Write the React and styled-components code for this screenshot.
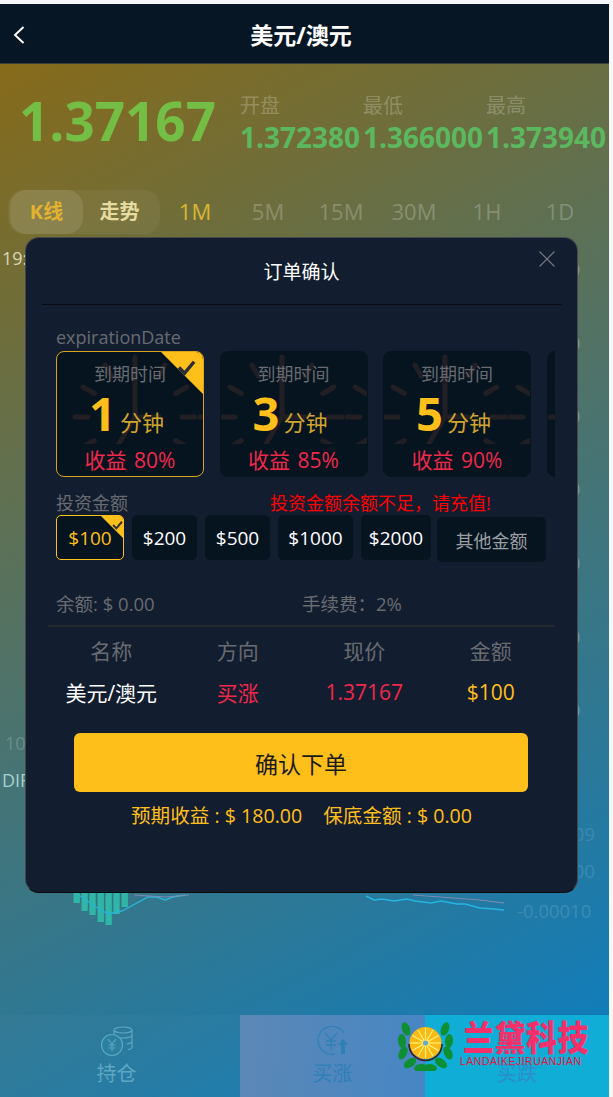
import React from "react";
import styled, { createGlobalStyle } from "styled-components";

const GlobalStyle = createGlobalStyle`
  html, body {
    margin: 0;
    padding: 0;
    background: #f6f7f8;
  }
  * {
    box-sizing: border-box;
  }
  body {
    font-family: "Open Sans", "Noto Sans CJK SC", sans-serif;
  }
`;

const Page = styled.div`
  position: relative;
  display: flex;
  flex-direction: column;
  width: 609px;
  height: 1093px;
  margin-top: 4px;
  overflow: hidden;
  background: linear-gradient(152deg, #8c6a12 0%, #4f7268 48%, #0a7ec4 100%);
`;

/* header */
const Header = styled.div`
  flex: none;
  position: relative;
  display: flex;
  align-items: center;
  justify-content: center;
  height: 60px;
  padding: 0 7px 0 0;
  background: #061624;
  border-bottom: 1px solid #38423a;
`;

const BackIcon = styled.svg`
  position: absolute;
  left: 12px;
  top: 21px;
  width: 14px;
  height: 20px;
`;

const Title = styled.div`
  font-size: 23px;
  font-weight: 700;
  color: #fff;
`;

/* price summary */
const Summary = styled.div`
  flex: none;
  display: flex;
  height: 126px;
  padding: 21px 0 0 19px;
`;

const Price = styled.div`
  width: 221px;
  font-size: 53px;
  line-height: 72px;
  font-weight: 700;
  color: #74be45;
`;

const Stat = styled.div`
  width: 123px;
  flex: none;
  padding-top: 7px;
`;

const StatLabel = styled.div`
  font-size: 20px;
  line-height: 28px;
  color: rgba(255, 255, 255, 0.24);
`;

const StatValue = styled.div`
  font-size: 28px;
  line-height: 34px;
  font-weight: 700;
  white-space: nowrap;
  color: #5cb85f;
`;

/* period tabs */
const Tabs = styled.div`
  flex: none;
  display: flex;
  height: 44px;
  padding-left: 8px;
`;

const ChartTypes = styled.div`
  display: flex;
  margin-right: -1.5px;
  padding: 0 4px 0 2px;
  border-radius: 16px;
  background: rgba(255, 255, 255, 0.05);
`;

const Tab = styled.div`
  width: 73px;
  display: flex;
  align-items: center;
  justify-content: center;
  padding-bottom: 3px;
  font-size: ${(p) => (p.$bold ? 20 : 22)}px;
  border-radius: 16px;
  font-weight: ${(p) => (p.$bold ? 700 : 400)};
  color: ${(p) => p.$color || "rgba(255, 255, 255, 0.24)"};
  background: ${(p) => (p.$active ? "rgba(255, 255, 255, 0.1)" : "none")};
`;

/* chart left behind the dialog */
const Chart = styled.svg`
  flex: 1;
  display: block;
  width: 100%;
  min-height: 0;
`;

/* bottom bar */
const Footer = styled.div`
  flex: none;
  display: flex;
  height: 82px;
`;

const FooterItem = styled.div`
  width: ${(p) => p.$width}px;
  display: flex;
  flex-direction: column;
  align-items: center;
  padding: 10px ${(p) => p.$inset || 0}px 0 0;
  font-size: 20px;
  line-height: 28px;
  color: ${(p) => p.$color};
  background: ${(p) => p.$bg};
`;

const FooterIcon = styled.svg`
  width: 36px;
  height: 32px;
  margin-bottom: 3px;
`;

/* watermark */
const Logo = styled.div`
  position: absolute;
  left: 397px;
  top: 1013px;
  display: flex;
  gap: 9px;
`;

const LogoMark = styled.svg`
  width: 57px;
  height: 54px;
`;

const LogoText = styled.div`
  display: flex;
  flex-direction: column;
`;

const LogoName = styled.div`
  font-family: "Noto Sans CJK SC", sans-serif;
  font-size: 31px;
  line-height: 38px;
  font-weight: 900;
  letter-spacing: 0.5px;
  color: #f4306a;
  transform: scaleY(1.12);
`;

const LogoSub = styled.div`
  margin-left: -3px;
  font-family: "Liberation Sans", sans-serif;
  font-size: 10.5px;
  line-height: 12px;
  letter-spacing: 0.5px;
  color: #e8123e;
  white-space: nowrap;
`;

/* dialog */
const Modal = styled.div`
  position: absolute;
  left: 25px;
  top: 233px;
  width: 553px;
  height: 656px;
  display: flex;
  flex-direction: column;
  padding: 0 16px;
  border-radius: 14px;
  background: #131d30;
  border: 1px solid #44484e;
  border-bottom-color: #0a0a0a;
`;

const ModalHead = styled.div`
  position: relative;
  flex: none;
  height: 67px;
  display: flex;
  align-items: center;
  justify-content: center;
  padding-bottom: 1px;
  border-bottom: 1px solid #05080c;
  font-size: 19px;
  color: #fff;
`;

const CloseIcon = styled.svg`
  position: absolute;
  right: 5px;
  top: 12px;
  width: 18px;
  height: 18px;
`;

const Section = styled.div`
  flex: none;
  padding: 0 14px;
`;

const Label = styled.div`
  font-size: 18px;
  line-height: 24px;
  color: #686b70;
`;

const PeriodLabel = styled(Label)`
  margin-top: 19px;
  line-height: 27px;
`;

const PeriodRow = styled.div`
  display: flex;
  gap: 15.5px;
  width: 499px;
  overflow: hidden;
`;

const PeriodCard = styled.div`
  position: relative;
  flex: none;
  width: 148px;
  height: 126px;
  overflow: hidden;
  display: flex;
  flex-direction: column;
  align-items: center;
  padding-top: 10px;
  border-radius: 8px;
  background: #061420;
  border: 1px solid ${(p) => (p.$active ? "#d8a41c" : "#061420")};
`;

const ClockFace = styled.svg`
  position: absolute;
  left: 0;
  top: 0;
  width: 148px;
  height: 92px;
`;

const Corner = styled.div`
  position: absolute;
  right: 0;
  top: 0;
  width: ${(p) => p.$size}px;
  height: ${(p) => p.$size}px;
  background: #ffbf1a;
  clip-path: polygon(0 0, 100% 0, 100% 100%);
`;

const CheckMark = styled.svg`
  position: absolute;
  right: ${(p) => p.$right}px;
  top: ${(p) => p.$top}px;
  width: ${(p) => p.$size}px;
  height: ${(p) => p.$size}px;
`;

const PeriodTitle = styled.div`
  position: relative;
  font-size: 18px;
  line-height: 24px;
  color: #686b70;
`;

const PeriodValue = styled.div`
  position: relative;
  display: flex;
  align-items: baseline;
  gap: 4px;
  height: 54px;
  margin-left: -7px;
  line-height: 54px;
`;

const PeriodNumber = styled.span`
  font-size: 47px;
  font-weight: 700;
  color: #ffbf1a;
`;

const PeriodUnit = styled.span`
  font-size: 22px;
  color: #d3a52c;
`;

const PeriodProfit = styled.div`
  position: relative;
  margin-top: 7px;
  font-size: 21px;
  line-height: 26px;
  word-spacing: 2px;
  color: #f0284a;
`;

const AmountHead = styled.div`
  display: flex;
  margin-top: 14px;
`;

const AmountError = styled.div`
  margin-left: 142px;
  font-size: 18px;
  line-height: 24px;
  color: #f00;
`;

const AmountRow = styled.div`
  display: flex;
  align-items: flex-start;
  gap: 8px;
`;

const AmountButton = styled.div`
  position: relative;
  overflow: hidden;
  flex: none;
  width: ${(p) => p.$width}px;
  height: 45px;
  display: flex;
  align-items: center;
  justify-content: center;
  border-radius: 5px;
  font-size: 19px;
  background: #061420;
  color: ${(p) => (p.$active ? "#ffbf1a" : "#fff")};
  border: 1px solid ${(p) => (p.$active ? "#ffbf1a" : "#061420")};
`;

const OtherButton = styled(AmountButton)`
  margin: 2px 0 0 -2px;
  font-size: 18px;
  color: #9b9ea2;
`;

const Balance = styled.div`
  display: flex;
  margin-top: 30px;
  font-size: 18.5px;
  line-height: 24px;
  color: #686b70;
`;

const BalanceItem = styled.div`
  width: 246px;
`;

const Rule = styled.div`
  flex: none;
  height: 2px;
  margin: 9px 6px 0 6px;
  background: #23282f;
`;

const Table = styled.div`
  flex: none;
  display: grid;
  grid-template-columns: repeat(4, 126.5px);
  grid-auto-rows: 42px;
  margin: 2px 0 0 6px;
  align-items: center;
  justify-items: center;
  font-size: 21px;
`;

const Cell = styled.div`
  color: ${(p) => p.$color};
`;

const Confirm = styled.div`
  flex: none;
  display: flex;
  align-items: center;
  justify-content: center;
  height: 59px;
  margin: 20px 33px 0 32px;
  border-radius: 6px;
  font-size: 23px;
  color: #1b1b1b;
  background: #ffbf1a;
`;

const Expected = styled.div`
  flex: none;
  display: flex;
  justify-content: center;
  gap: 21px;
  margin-top: 10px;
  font-size: 19.6px;
  line-height: 28px;
  color: #ffbf1a;
`;

const PERIODS = [
  { num: 1, profit: "80%", clock: 78, active: true },
  { num: 3, profit: "85%", clock: 61 },
  { num: 5, profit: "90%", clock: 61 },
  { clock: 61 },
];

const AMOUNTS = [
  { text: "$100", width: 68, active: true },
  { text: "$200", width: 65 },
  { text: "$500", width: 65 },
  { text: "$1000", width: 75 },
  { text: "$2000", width: 70 },
];

const ROWS = [
  ["名称", "#686b70"],
  ["方向", "#686b70"],
  ["现价", "#686b70"],
  ["金额", "#686b70"],
  ["美元/澳元", "#fff"],
  ["买涨", "#f0284a"],
  ["1.37167", "#f0284a"],
  ["$100", "#ffbf1a"],
];

const BARS = [
  [73.6, 903],
  [81.5, 911],
  [89.4, 915],
  [97.6, 922],
  [105.5, 925],
  [113.4, 914],
  [121.6, 907],
];

const Clock = ({ cx }) => {
  const ticks = [];
  for (let i = 0; i < 12; i++) {
    const a = (i * Math.PI) / 6;
    ticks.push(
      <line
        key={i}
        x1={cx + Math.sin(a) * 47}
        y1={65 - Math.cos(a) * 47}
        x2={cx + Math.sin(a) * 60}
        y2={65 - Math.cos(a) * 60}
      />
    );
  }
  return (
    <g stroke="#221f24" strokeWidth="5" strokeLinecap="round" fill="none">
      {ticks}
      <path d={`M${cx} 19V65H${cx + 26}`} strokeLinecap="butt" />
      <path d={`M${cx} 65L${cx - 18} 95`} strokeLinecap="butt" />
    </g>
  );
};

const Check = ({ right, top, size }) => (
  <CheckMark $right={right} $top={top} $size={size} viewBox="0 0 20 20">
    <path d="M2 11l6 6L18 5" fill="none" stroke="#2b2f38" strokeWidth="3.6" />
  </CheckMark>
);

const LEAVES = [
  [9, 12, -20], [5, 24, -5], [6, 36, 25], [13, 46, 55], [24, 51, 85],
  [48, 12, 20], [52, 24, 5], [51, 36, -25], [44, 46, -55], [33, 51, -85],
];

const LogoIcon = () => {
  const rays = [];
  for (let i = 0; i < 12; i++) {
    rays.push(
      <line key={i} x1="28.5" y1="26" x2="28.5" y2="11" stroke="#fff27a" strokeWidth="1.2" transform={`rotate(${i * 30} 28.5 26)`} />
    );
  }
  return (
    <LogoMark viewBox="0 0 57 54">
      {LEAVES.map(([x, y, r]) => (
        <ellipse key={`${x}-${y}`} cx={x} cy={y} rx="4" ry="7" fill="#0f8f34" transform={`rotate(${r} ${x} ${y})`} />
      ))}
      <circle cx="28.5" cy="26" r="16" fill="#fdb913" />
      {rays}
      <circle cx="28.5" cy="26" r="2.5" fill="#5fa8d0" />
      <path d="M12 27a16.5 16.5 0 0 0 33 0" fill="none" stroke="#3a1f22" strokeWidth="1.6" />
    </LogoMark>
  );
};

export default function App() {
  return (
    <Page>
      <GlobalStyle />
      <Header>
        <BackIcon viewBox="0 0 14 20">
          <path d="M11.5 2L3 10l8.5 8" fill="none" stroke="#fff" strokeWidth="2" />
        </BackIcon>
        <Title>美元/澳元</Title>
      </Header>

      <Summary>
        <Price>1.37167</Price>
        <Stat>
          <StatLabel>开盘</StatLabel>
          <StatValue>1.372380</StatValue>
        </Stat>
        <Stat>
          <StatLabel>最低</StatLabel>
          <StatValue>1.366000</StatValue>
        </Stat>
        <Stat>
          <StatLabel>最高</StatLabel>
          <StatValue>1.373940</StatValue>
        </Stat>
      </Summary>

      <Tabs>
        <ChartTypes>
          <Tab $active $bold $color="#e3b22e">K线</Tab>
          <Tab $bold $color="#e6dca0">走势</Tab>
        </ChartTypes>
        <Tab $color="#d9b733">1M</Tab>
        <Tab>5M</Tab>
        <Tab>15M</Tab>
        <Tab>30M</Tab>
        <Tab>1H</Tab>
        <Tab>1D</Tab>
      </Tabs>

      <Chart viewBox="0 234 609 781">
        <g fontFamily="Open Sans, sans-serif" fontSize="18">
          <text x="2" y="265" fill="#d9d6b8">19:</text>
          <text x="5" y="750" fill="rgba(255,255,255,0.2)">10</text>
          <text x="2" y="787" fill="#a6d0d2">DIF</text>
          {[277, 350, 423, 496, 570, 644, 717].map((y, i) => (
            <text key={y} x="570" y={y} fill="rgba(255,255,255,0.28)">{i === 0 ? "9" : "0"}</text>
          ))}
          <text x="525" y="841" fontSize="19" fill="rgba(255,255,255,0.13)">0.00009</text>
          <text x="525" y="878" fontSize="19" fill="rgba(255,255,255,0.13)">0.00000</text>
          <text x="517" y="918" fontSize="18.5" fill="rgba(255,255,255,0.15)">-0.00010</text>
        </g>
        {BARS.map(([x, y]) => (
          <rect key={x} x={x} y="890" width="6.3" height={y - 890} fill="#2fb6a6" />
        ))}
        <polyline
          points="79,895 96,907 108,914 122,911 148,897 157,897 165,900 173,897 185,895"
          fill="none"
          stroke="#27b4d6"
          strokeWidth="1.4"
        />
        <polyline
          points="366,896 374,900 382,899 394,901 407,899 415,901 431,903 441,901 457,904 465,904 480,908 494,909 504,910"
          fill="none"
          stroke="#27b4e0"
          strokeWidth="1.4"
        />
        <polyline points="134,895 165,897 189,895" fill="none" stroke="#7f8ab0" strokeWidth="1.2" />
        <polyline points="413,895 480,900 504,903" fill="none" stroke="#7f8ab0" strokeWidth="1.2" />
      </Chart>

      <Footer>
        <FooterItem $width={240} $inset={7} $bg="rgba(255,255,255,0.02)" $color="#5da6c4">
          <FooterIcon viewBox="0 0 36 32" fill="none" stroke="currentColor" strokeWidth="1.2">
            <ellipse cx="24" cy="5" rx="9" ry="3" />
            <path d="M15 5v5c0 1.6 4 3 9 3s9-1.4 9-3V5M33 10v6c0 1.4-2 2.4-5 2.8M33 16v6c0 1.2-1.6 2.2-4 2.6" />
            <circle cx="13" cy="20" r="10.5" fill="#2b7f9f" />
            <path d="M9 14l4 5 4-5M13 19v7M9.5 20h7M9.5 23h7" />
          </FooterIcon>
          持仓
        </FooterItem>
        <FooterItem $width={185} $bg="linear-gradient(100deg, #5d88b6, #4586c4)" $color="#2f80b8">
          <FooterIcon viewBox="0 0 36 32" fill="none" stroke="currentColor" strokeWidth="1.3">
            <path d="M29 8A14 14 0 1 0 20 29" />
            <path d="M10 8l6 7 6-7M16 15v10M11 16h10M11 20h10" />
            <path d="M28 14l5 6h-3v9h-4v-9h-3z" fill="currentColor" stroke="none" />
          </FooterIcon>
          买涨
        </FooterItem>
        <FooterItem $width={184} $bg="#10add6" $color="#2f8cc8">
          <FooterIcon viewBox="0 0 36 32" fill="none" stroke="currentColor" strokeWidth="1.3">
            <path d="M29 8A14 14 0 1 0 20 29" />
            <path d="M10 8l6 7 6-7M16 15v10M11 16h10M11 20h10" />
          </FooterIcon>
          买跌
        </FooterItem>
      </Footer>

      <Modal>
        <ModalHead>
          订单确认
          <CloseIcon viewBox="0 0 18 18">
            <path d="M1.5 1.5l15 15M16.5 1.5l-15 15" stroke="#74777c" strokeWidth="1.2" />
          </CloseIcon>
        </ModalHead>

        <Section>
          <PeriodLabel>expirationDate</PeriodLabel>
          <PeriodRow>
            {PERIODS.map((p, i) => (
              <PeriodCard key={i} $active={p.active}>
                <ClockFace viewBox="0 0 148 92">
                  <Clock cx={p.clock} />
                  <Clock cx={p.clock + 125} />
                </ClockFace>
                {p.num && (
                  <>
                    <PeriodTitle>到期时间</PeriodTitle>
                    <PeriodValue>
                      <PeriodNumber>{p.num}</PeriodNumber>
                      <PeriodUnit>分钟</PeriodUnit>
                    </PeriodValue>
                    <PeriodProfit>收益 {p.profit}</PeriodProfit>
                  </>
                )}
                {p.active && (
                  <>
                    <Corner $size={42} />
                    <Check right={7} top={5} size={19} />
                  </>
                )}
              </PeriodCard>
            ))}
          </PeriodRow>

          <AmountHead>
            <Label>投资金额</Label>
            <AmountError>投资金额余额不足，请充值!</AmountError>
          </AmountHead>
          <AmountRow>
            {AMOUNTS.map((a) => (
              <AmountButton key={a.text} $width={a.width} $active={a.active}>
                {a.text}
                {a.active && (
                  <>
                    <Corner $size={22} />
                    <Check right={0} top={3} size={11} />
                  </>
                )}
              </AmountButton>
            ))}
            <OtherButton $width={109}>其他金额</OtherButton>
          </AmountRow>

          <Balance>
            <BalanceItem>余额: $ 0.00</BalanceItem>
            <div>手续费：2%</div>
          </Balance>
        </Section>

        <Rule />

        <Table>
          {ROWS.map(([text, color]) => (
            <Cell key={text} $color={color}>{text}</Cell>
          ))}
        </Table>

        <Confirm>确认下单</Confirm>

        <Expected>
          <span>预期收益 : $ 180.00</span>
          <span>保底金额 : $ 0.00</span>
        </Expected>
      </Modal>

      <Logo>
        <LogoIcon />
        <LogoText>
          <LogoName>兰黛科技</LogoName>
          <LogoSub>LANDAIKEJIRUANJIAN</LogoSub>
        </LogoText>
      </Logo>
    </Page>
  );
}
